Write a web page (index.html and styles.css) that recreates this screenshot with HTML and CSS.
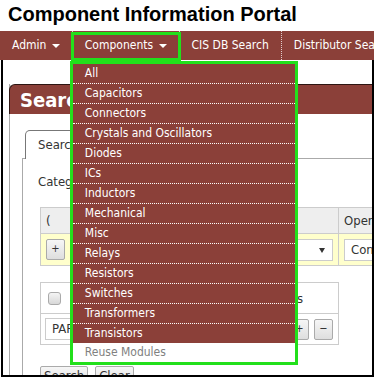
FILE: index.html
```html
<!DOCTYPE html>
<html lang="en">
<head>
    <meta charset="UTF-8">
    <meta name="viewport" content="width=device-width, initial-scale=1.0">
    <title>Component Information Portal</title>
    <link rel="stylesheet" href="styles.css">
</head>
<body>

<h1 class="portal-title">Component Information Portal</h1>

<nav class="topnav">
    <ul class="topnav__list">
        <li class="topnav__item">Admin <span class="topnav__caret"></span></li>
        <li class="topnav__item topnav__item--open">Components <span class="topnav__caret"></span>
            <ul class="dropdown">
                <li class="dropdown__item">All</li>
                <li class="dropdown__item">Capacitors</li>
                <li class="dropdown__item">Connectors</li>
                <li class="dropdown__item">Crystals and Oscillators</li>
                <li class="dropdown__item">Diodes</li>
                <li class="dropdown__item">ICs</li>
                <li class="dropdown__item">Inductors</li>
                <li class="dropdown__item">Mechanical</li>
                <li class="dropdown__item">Misc</li>
                <li class="dropdown__item">Relays</li>
                <li class="dropdown__item">Resistors</li>
                <li class="dropdown__item">Switches</li>
                <li class="dropdown__item">Transformers</li>
                <li class="dropdown__item">Transistors</li>
                <li class="dropdown__item dropdown__item--plain">Reuse Modules</li>
            </ul>
        </li>
        <li class="topnav__item">CIS DB Search</li>
        <li class="topnav__item">Distributor Search</li>
    </ul>
</nav>

<div class="page">
    <div class="panel">
        <div class="panel__head">Search</div>
        <div class="panel__body">
            <ul class="tabs__nav">
                <li class="tabs__tab">Search</li>
            </ul>
            <div class="tabs__panel">
                <p class="field-label">Category:</p>

                <div class="criteria">
                    <div class="criteria__cell criteria__cell--head">(</div>
                    <div class="criteria__cell criteria__cell--head">Operator</div>
                    <div class="criteria__cell criteria__cell--row">
                        <span class="btn btn--small">+</span>
                        <span class="select">Part Number</span>
                    </div>
                    <div class="criteria__cell criteria__cell--row">
                        <span class="input">Contains</span>
                    </div>
                </div>

                <div class="columns-box">
                    <div class="columns-box__row">
                        <span class="checkbox"></span>
                        <span class="columns-box__label">Output Columns</span>
                    </div>
                    <div class="columns-box__row columns-box__row--last">
                        <span class="input input--wide">PART_NUMBER</span>
                        <span class="btn btn--small btn--end">+</span>
                        <span class="btn btn--small">&minus;</span>
                    </div>
                </div>

                <div class="actions">
                    <span class="btn">Search</span>
                    <span class="btn">Clear</span>
                </div>
            </div>
        </div>
    </div>
</div>

</body>
</html>
```

FILE: styles.css
```css
html,
body {
    margin: 0;
    overflow: hidden;
}
body {
    background: #fff;
    color: #333;
    font-family: "DejaVu Sans Condensed", "DejaVu Sans", sans-serif;
    font-stretch: condensed;
    font-size: 13px;
}
.portal-title {
    margin: 0;
    padding: 3px 0 5px 8px;
    font-family: "Liberation Sans", Arial, sans-serif;
    font-stretch: normal;
    font-size: 20px;
    font-weight: bold;
    line-height: 23px;
    color: #000;
}

/* top menu */
.topnav {
    background: #8b4039;
    height: 29px;
}
.topnav__list {
    display: flex;
    margin: 0;
    padding: 0;
    list-style: none;
    white-space: nowrap;
}
.topnav__item {
    position: relative;
    padding: 0 12px;
    border-right: 1px dotted rgba(255, 255, 255, 0.75);
    color: #fff;
    font-size: 12px;
    line-height: 29px;
}
.topnav__caret {
    display: inline-block;
    margin-left: 2px;
    vertical-align: middle;
    border-left: 4px solid transparent;
    border-right: 4px solid transparent;
    border-top: 4px solid #fff;
}
.topnav__item--open::after {
    content: "";
    position: absolute;
    top: 1px;
    bottom: -1px;
    left: -2px;
    right: -2px;
    border: 3px solid #22e01b;
}
.dropdown {
    position: absolute;
    top: 30px;
    left: -3px;
    z-index: 2;
    width: 222px;
    margin: 0;
    padding: 0;
    list-style: none;
    border: 3px solid #22e01b;
    background: #8b4039;
}
.dropdown__item {
    height: 19px;
    padding-left: 12px;
    border-bottom: 1px dotted #fff;
    color: #fff;
    line-height: 19px;
}
.dropdown__item:nth-last-child(2) {
    border-bottom: 0;
}
.dropdown__item--plain {
    background: #fff;
    color: #808080;
    border-bottom: 0;
}

/* page behind the menu */
.page {
    height: 317px;
    box-sizing: border-box;
    margin-left: 1px;
    border: 2px solid #000;
    border-top: 0;
    overflow: hidden;
}
.panel {
    width: 520px;
    margin: 24px 0 0 6px;
    border-left: 1px solid #aaa;
}
.panel__head {
    height: 27px;
    margin-left: -1px;
    padding: 2px 0 0 10px;
    border-top: 1px solid #2d1512;
    border-left: 1px solid #2d1512;
    border-top-left-radius: 6px;
    background: #8b4039;
    color: #fff;
    font-size: 20px;
    font-weight: bold;
    line-height: 27px;
}
.panel__body {
    padding: 16px 0 0 12px;
}
.tabs__nav {
    display: flex;
    margin: 0;
    padding: 0 0 0 3px;
    list-style: none;
}
.tabs__tab {
    position: relative;
    margin-bottom: -1px;
    padding: 0 12px;
    border: 1px solid #777;
    border-bottom: 0;
    border-radius: 5px 5px 0 0;
    background: #fff;
    line-height: 28px;
}
.tabs__panel {
    height: 260px;
    padding: 15px 0 0 15px;
    border: 1px solid #aaa;
}
.field-label {
    margin: 0 0 17px;
    line-height: 16px;
}

.criteria {
    display: grid;
    grid-template-columns: 298px 160px;
    margin-left: 2px;
    border-top: 1px solid #ccc;
    border-left: 1px solid #ccc;
}
.criteria__cell {
    box-sizing: border-box;
    border-right: 1px solid #ccc;
    border-bottom: 1px solid #ccc;
    padding: 0 5px;
}
.criteria__cell--head {
    height: 26px;
    background: #eee;
    line-height: 25px;
}
.criteria__cell--row {
    display: flex;
    align-items: center;
    gap: 8px;
    height: 32px;
    background: #ffffcc;
}
.select,
.input {
    box-sizing: border-box;
    height: 22px;
    padding: 0 6px;
    border: 1px solid #ccc;
    background: #fff;
    line-height: 20px;
}
.select {
    position: relative;
    flex: 1;
}
.select::after {
    content: "";
    position: absolute;
    right: 7px;
    top: 8px;
    border-left: 3px solid transparent;
    border-right: 3px solid transparent;
    border-top: 5px solid #333;
}
.input {
    width: 140px;
}
.input--wide {
    width: 200px;
}

.columns-box {
    width: 299px;
    box-sizing: border-box;
    margin: 16px 0 0 2px;
    border: 1px solid #ccc;
}
.columns-box__row {
    display: flex;
    align-items: center;
    height: 30px;
    padding: 0 5px 0 7px;
    border-bottom: 1px solid #ccc;
}
.columns-box__row--last {
    height: 30px;
    padding-left: 4px;
    border-bottom: 0;
}
.columns-box__label {
    margin-left: auto;
    padding-right: 30px;
}
.checkbox {
    width: 11px;
    height: 11px;
    border: 1px solid #aaa;
    border-radius: 3px;
    background: linear-gradient(#f4f4f4, #d8d8d8);
}

.btn {
    display: inline-block;
    box-sizing: border-box;
    height: 21px;
    padding: 0 3px;
    border: 1px solid #aaa;
    border-radius: 2px;
    background: linear-gradient(#f6f6f6, #dedede);
    color: #333;
    line-height: 18px;
    text-align: center;
}
.btn--small {
    width: 19px;
    padding: 0;
    font-size: 11px;
}
.btn--end {
    margin-left: auto;
    margin-right: 5px;
}
.actions {
    display: flex;
    gap: 7px;
    margin: 21px 0 0 2px;
}
```
